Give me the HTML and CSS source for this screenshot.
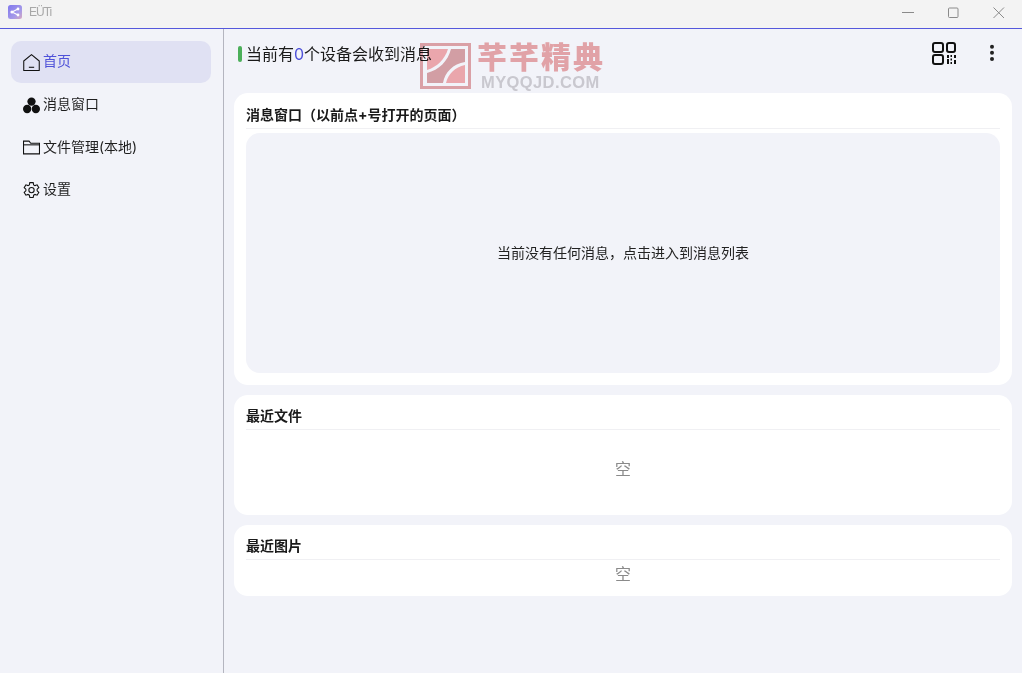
FILE: index.html
```html
<!DOCTYPE html>
<html lang="zh-CN">
<head>
<meta charset="utf-8">
<title>EUTi</title>
<link rel="stylesheet" href="styles.css">
</head>
<body>
<div class="window">
  <header class="titlebar">
    <div class="app">
      <svg class="app-icon" width="14" height="14" viewBox="0 0 14 14"><defs><linearGradient id="g" x1="0" y1="0" x2="1" y2="1"><stop offset="0" stop-color="#8077ee"/><stop offset=".65" stop-color="#a69be8"/><stop offset="1" stop-color="#d8a8c0"/></linearGradient></defs><rect width="14" height="14" rx="2.500" fill="url(#g)"/><path d="M4 7l6-3M4 7l6 3" stroke="#fff" stroke-width="1.200"/><circle cx="4" cy="7" r="1.600" fill="#fff"/><circle cx="10" cy="4" r="1.400" fill="#fff"/><circle cx="10" cy="10" r="1.400" fill="#fff"/></svg>
      <span class="app-name">EÜTi</span>
    </div>
    <div class="win-controls">
      <span class="win-btn"><svg width="12" height="12" viewBox="0 0 12 12"><path d="M0 5.500h12" stroke="#8a8a8a"/></svg></span>
      <span class="win-btn"><svg width="12" height="12" viewBox="0 0 12 12"><rect x="1.500" y="1" width="9.500" height="9.500" rx="1" fill="none" stroke="#8a8a8a"/></svg></span>
      <span class="win-btn win-close"><svg width="12" height="12" viewBox="0 0 12 12"><path d="M.5 .5l10.500 10.500M11 .5L.5 11" stroke="#8a8a8a"/></svg></span>
    </div>
  </header>
  <div class="body">
    <nav class="sidebar">
      <a class="nav-item active">
        <svg class="nav-icon" viewBox="0 0 16 16"><path d="M.7 6.600L8 .6l7.300 6v9H.7z" fill="none" stroke="#111" stroke-width="1" stroke-linejoin="round"/><path d="M5.500 12.500h5" stroke="#111"/></svg>
        <span>首页</span>
      </a>
      <a class="nav-item">
        <svg class="nav-icon" viewBox="0 0 16 16"><circle cx="8" cy="4.300" r="3.900" fill="#111"/><circle cx="3.900" cy="11.300" r="3.900" fill="#111"/><circle cx="12.100" cy="11.300" r="3.900" fill="#111"/></svg>
        <span>消息窗口</span>
      </a>
      <a class="nav-item">
        <svg class="nav-icon" viewBox="0 0 16 16"><path d="M.5 14V2h5.200l1.600 2h8.200v10z" fill="none" stroke="#111"/><path d="M.5 5.500h15" stroke="#111"/></svg>
        <span>文件管理(本地)</span>
      </a>
      <a class="nav-item">
        <svg class="nav-icon" viewBox="0 0 16 16"><path d="M6.400.6h3.200l.4 2.100 1.300.7 2-.7 1.600 2.700-1.600 1.400v1.500l1.600 1.400-1.600 2.700-2-.7-1.300.7-.4 2.100H6.400L6 12.400l-1.300-.7-2 .7L1.100 9.700l1.600-1.400V6.800L1.100 5.400l1.600-2.700 2 .7L6 2.700z" fill="none" stroke="#111"/><circle cx="8" cy="7.600" r="2.500" fill="none" stroke="#111"/></svg>
        <span>设置</span>
      </a>
    </nav>
    <main class="main">
      <div class="topbar">
        <div class="status">
          <i class="status-bar"></i>
          <span>当前有<b class="count">0</b>个设备会收到消息</span>
        </div>
        <div class="top-actions">
          <svg class="qr" width="24" height="24" viewBox="0 0 24 24"><g fill="none" stroke="#111" stroke-width="2"><rect x="1" y="2" width="10" height="9" rx="2"/><rect x="15" y="2" width="8" height="9" rx="2"/><rect x="1" y="14" width="10" height="9" rx="2"/></g><path d="M15 14h2v3h-2zM18.500 14h1.500v2h-1.500zM22 14h2v3h-2zM15 18h2v5h-2zM18.500 17.500h1.500v2h-1.500zM18.500 21h1.500v2h-1.500zM22 19h2v4h-2z" fill="#111"/></svg>
          <svg class="more" width="6" height="18" viewBox="0 0 6 18"><circle cx="3" cy="2.700" r="2" fill="#222"/><circle cx="3" cy="8.700" r="2" fill="#222"/><circle cx="3" cy="15" r="2" fill="#222"/></svg>
        </div>
      </div>
      <section class="card card-msg">
        <h2 class="card-title">消息窗口（以前点+号打开的页面）</h2>
        <div class="msg-box"><span class="msg-text">当前没有任何消息，点击进入到消息列表</span></div>
      </section>
      <section class="card card-files">
        <h2 class="card-title card-title-short">最近文件</h2>
        <div class="empty">空</div>
      </section>
      <section class="card card-pics">
        <h2 class="card-title card-title-short">最近图片</h2>
        <div class="empty">空</div>
      </section>
    </main>
  </div>
  <div class="watermark">
    <svg class="wm-logo" width="51" height="46" viewBox="0 0 51 46"><path fill-rule="evenodd" d="M0 0h51v46H0zM3 3v40h45V3z" fill="#e6a8aa"/><path d="M7 6h21C25 16 17 24 7 27z" fill="#f7aeb0"/><path d="M7 30C19 27 28 18 31 6h14v13C33 21 25 29 23 40H7z" fill="#dea6a8"/><path d="M26 40c2-9 9-16 19-18v18z" fill="#f7aeb0"/></svg>
    <div class="wm-text">
      <div class="wm-cn">芊芊精典</div>
      <div class="wm-en">MYQQJD.COM</div>
    </div>
  </div>
</div>
</body>
</html>
```
FILE: styles.css
```css
* { box-sizing: border-box; }
html, body { margin: 0; padding: 0; }
body { font-family: "Inter", "Noto Sans CJK SC", sans-serif; color: #1a1a1a; }
.window { position: relative; width: 1022px; height: 673px; background: #f2f3f9; overflow: hidden; display: flex; flex-direction: column; }
.titlebar { height: 29px; background: #f3f3f3; border-bottom: 1px solid #5558dc; display: flex; justify-content: space-between; align-items: flex-start; }
.app { display: flex; align-items: center; gap: 7px; padding: 5px 0 0 8px; }
.app-name { font-family: "Liberation Sans", sans-serif; font-size: 12px; line-height: 14px; letter-spacing: -1px; color: #a8a8a8; }
.win-controls { display: flex; padding: 7px 0 0 0; margin-right: 2px; }
.win-btn { width: 45px; height: 12px; display: flex; justify-content: center; }
.win-btn svg { display: block; }
.win-close svg { margin-left: 2px; }
.body { flex: 1; display: flex; min-height: 0; }
.sidebar { width: 224px; border-right: 1px solid #b4b5bf; padding: 12.450px 12px 0 11px; display: flex; flex-direction: column; }
.nav-item { height: 42px; margin-bottom: .6px; border-radius: 10px; display: flex; align-items: center; gap: 3px; padding-left: 12px; font-size: 14px; color: #1f1f1f; }
.nav-item span { margin-bottom: 4px; }
.nav-item.active { background: #e0e1f3; color: #4f52d9; }
.nav-icon { width: 17px; height: 17px; flex: none; }
.main { flex: 1; padding: 0 10px 0 10px; display: flex; flex-direction: column; }
.topbar { height: 64px; display: flex; justify-content: space-between; align-items: flex-start; }
.status { display: flex; align-items: center; margin: 15px 0 0 4px; font-size: 16px; line-height: 20px; gap: 4px; }
.status-bar { width: 4px; height: 16px; border-radius: 2px; background: #4caf5a; }
.count { font-weight: 400; color: #4f52d9; }
.top-actions { display: flex; align-items: center; gap: 33px; margin: 12px 17px 0 0; }
.top-actions svg { display: block; }
.card { background: #fff; border-radius: 14px; padding: 12px 12px 0; margin-bottom: 10px; }
.card-title { margin: 0; height: 24px; font-size: 14px; line-height: 20px; font-weight: 700; color: #1a1a1a; border-bottom: 1px solid #f0f0f3; }
.card-title-short { height: 23px; line-height: 18px; }
.card-msg { height: 292px; }
.msg-box { margin-top: 4px; height: 240px; border-radius: 14px; background: #f2f3f9; display: flex; align-items: center; justify-content: center; font-size: 14px; color: #222; }
.msg-text { margin-bottom: 2px; }
.card-files { height: 120px; }
.card-files .empty { height: 80px; padding-bottom: 4px; display: flex; align-items: center; justify-content: center; }
.card-pics { height: 71px; }
.card-pics .empty { height: 31px; padding-bottom: 6px; display: flex; align-items: center; justify-content: center; }
.empty { font-size: 16px; color: #8a8a8a; }
.watermark { position: absolute; left: 420px; top: 43px; display: flex; gap: 6px; pointer-events: none; mix-blend-mode: multiply; }
.wm-logo { display: block; }
.wm-text { margin-top: -3px; }
.wm-cn { font-size: 30px; line-height: 34px; font-weight: 900; letter-spacing: 2px; color: #eeaaab; white-space: nowrap; }
.wm-en { font-family: "Liberation Sans", sans-serif; font-size: 16.500px; line-height: 19px; font-weight: 700; letter-spacing: .4px; color: #d4d2d4; white-space: nowrap; margin: -1px 0 0 4px; }
```
